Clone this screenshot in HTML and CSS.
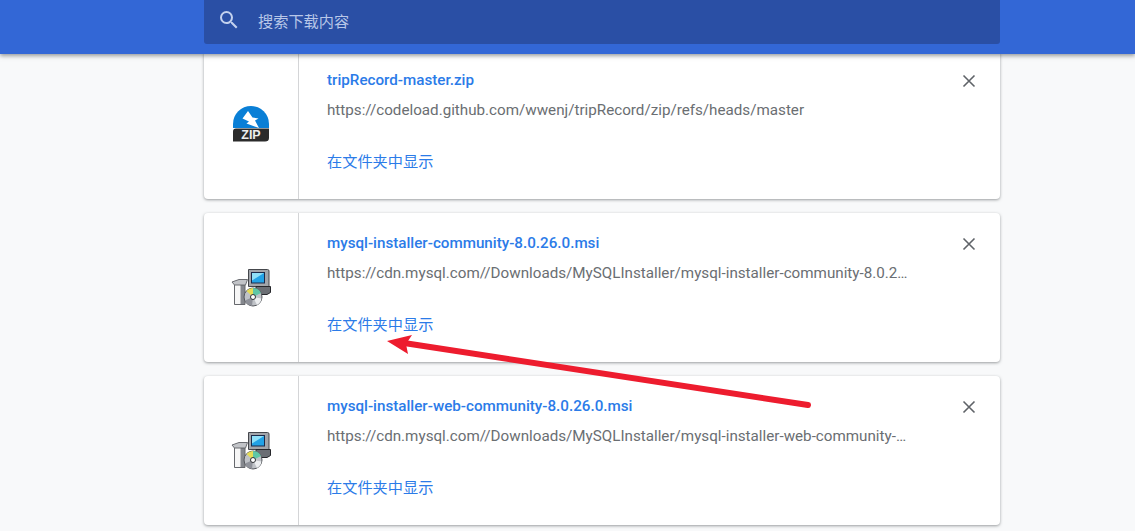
FILE: index.html
```html
<!DOCTYPE html>
<html lang="zh-CN">
<head>
  <meta charset="UTF-8">
  <meta name="viewport" content="width=device-width, initial-scale=1.0">
  <title>下载内容</title>
  <link rel="stylesheet" href="styles.css">
</head>
<body>
  <header class="toolbar">
    <div class="search-box">
      <svg class="search-icon" viewBox="0 0 24 24" width="24" height="24">
        <path d="M15.5 14h-.79l-.28-.27A6.47 6.47 0 0 0 16 9.5 6.5 6.5 0 1 0 9.5 16c1.61 0 3.09-.59 4.23-1.57l.27.28v.79l5 4.99L20.49 19l-4.99-5zm-6 0C7.01 14 5 11.99 5 9.5S7.01 5 9.5 5 14 7.01 14 9.5 11.99 14 9.5 14z"/>
      </svg>
      <span class="search-text">搜索下载内容</span>
    </div>
  </header>

  <main class="download-list">
    <section class="card">
      <div class="card-icon">
        <svg class="zip-icon" viewBox="0 0 36 36" width="36" height="36">
          <path d="M0 22 V18 A18 18 0 0 1 36 18 V22z" fill="#0a7fd6"/>
          <path d="M15 5 L9.500 12.500 L16 15.500 L13.500 17.500 L26 22 L22 14.500 L25.500 12.500 L19.500 11.500z" fill="#fff"/>
          <path d="M3 22.500 H36 V32 Q36 35.500 32 35.500 H0 V25.500 Q0 22.500 3 22.500z" fill="#2b2b2b"/>
          <text class="zip-label" x="18" y="33" text-anchor="middle">ZIP</text>
        </svg>
      </div>
      <div class="card-body">
        <a class="file-name">tripRecord-master.zip</a>
        <div class="file-url">https://codeload.github.com/wwenj/tripRecord/zip/refs/heads/master</div>
        <a class="show-link">在文件夹中显示</a>
      </div>
      <svg class="close-icon" viewBox="0 0 14 14" width="14" height="14"><path d="M1.500 1.500 12.500 12.500M12.500 1.500 1.500 12.500"/></svg>
    </section>

    <section class="card">
      <div class="card-icon">
        <svg viewBox="0 0 40 40" width="40" height="40"><use href="#msi-icon"/></svg>
      </div>
      <div class="card-body">
        <a class="file-name">mysql-installer-community-8.0.26.0.msi</a>
        <div class="file-url">https://cdn.mysql.com//Downloads/MySQLInstaller/mysql-installer-community-8.0.26.0.msi</div>
        <a class="show-link">在文件夹中显示</a>
      </div>
      <svg class="close-icon" viewBox="0 0 14 14" width="14" height="14"><path d="M1.500 1.500 12.500 12.500M12.500 1.500 1.500 12.500"/></svg>
    </section>

    <section class="card">
      <div class="card-icon">
        <svg viewBox="0 0 40 40" width="40" height="40"><use href="#msi-icon"/></svg>
      </div>
      <div class="card-body">
        <a class="file-name">mysql-installer-web-community-8.0.26.0.msi</a>
        <div class="file-url">https://cdn.mysql.com//Downloads/MySQLInstaller/mysql-installer-web-community-8.0.26.0.msi</div>
        <a class="show-link">在文件夹中显示</a>
      </div>
      <svg class="close-icon" viewBox="0 0 14 14" width="14" height="14"><path d="M1.500 1.500 12.500 12.500M12.500 1.500 1.500 12.500"/></svg>
    </section>
  </main>

  <!-- red annotation arrow drawn over the page -->
  <svg class="arrow" viewBox="0 0 1135 531" width="1135" height="531">
    <path d="M808 405 L404 343" stroke="#ed1c2e" stroke-width="6" stroke-linecap="round" fill="none"/>
    <path d="M387 341 L412 335 L406 344 L408 354z" fill="#ed1c2e"/>
  </svg>

  <svg class="defs" width="0" height="0">
    <defs>
      <g id="msi-icon">
        <!-- monitor -->
        <path d="M17.500 2.500 H36.500 Q38 2.500 38 4 V19.500 H17.500z" fill="#a2a5aa" stroke="#45474c" stroke-width="1"/>
        <path d="M20 5 H34 V16.500 H20z" fill="#1c2a4a"/>
        <path d="M21 6 H33 V15.500 H21z" fill="#22a2e6"/>
        <path d="M21 6 H33 L21 13.500z" fill="#8fe0f8"/>
        <path d="M25 19.500 H39.500 V25.500 L36 27.500 H30 L25 24z" fill="#6b6e74" stroke="#26272b" stroke-width="1"/>
        <!-- box -->
        <path d="M3.500 18 H14 V37.500 H3.500z" fill="#85888e" stroke="#66686d" stroke-width="1"/>
        <path d="M4 18 H9.500 V37 H4z" fill="#f6f6f6"/>
        <path d="M1 15 L8 12.500 H16.500 L14.500 18 H3.500z" fill="#c2c4c8" stroke="#6a6c71" stroke-width="1"/>
        <!-- disc -->
        <circle cx="22" cy="30" r="9" fill="#bfc2c7" stroke="#55585d" stroke-width="1"/>
        <path d="M22 30 L15.500 24 A9 9 0 0 1 22 21z" fill="#e6dc55"/>
        <path d="M22 30 L22 21 A9 9 0 0 1 30 26z" fill="#5fc7a6"/>
        <path d="M22 30 L30.500 31.500 A9 9 0 0 1 26 38z" fill="#eceef0"/>
        <path d="M22 30 L14 33.500 A9 9 0 0 0 21 39z" fill="#8f929a"/>
        <circle cx="22" cy="30" r="2.500" fill="#fff" stroke="#2e3034" stroke-width="1"/>
      </g>
    </defs>
  </svg>
</body>
</html>
```

FILE: styles.css
```css
html, body {
  height: 100%;
}

body {
  margin: 0;
  background: #f8f9fa;
  font-family: Roboto, "Noto Sans CJK SC", sans-serif;
  overflow: hidden;
}

a {
  color: #2b7be8;
}

.toolbar {
  position: relative;
  z-index: 2;
  height: 54px;
  padding-left: 204px;
  box-sizing: border-box;
  background: #3367d6;
  box-shadow: 0 2px 4px rgba(60, 64, 67, 0.5);
}

.search-box {
  display: flex;
  align-items: center;
  width: 796px;
  height: 44px;
  padding-bottom: 4px;
  box-sizing: border-box;
  background: #2a4fa5;
  border-radius: 0 0 3px 3px;
}

.search-icon {
  margin-left: 13px;
  fill: #c3d1ee;
}

.search-text {
  margin-left: 17px;
  font-size: 15.2px;
  color: #b8c7e8;
}

.download-list {
  display: flex;
  flex-direction: column;
  gap: 14px;
  width: 796px;
  margin: -4px 0 0 204px;
}

.card {
  position: relative;
  display: flex;
  height: 149px;
  background: #fff;
  border-radius: 4px;
  box-shadow: 0 1px 3px rgba(60, 64, 67, 0.5);
}

.card-icon {
  display: flex;
  align-items: center;
  justify-content: center;
  flex: none;
  width: 95px;
  padding-bottom: 2px;
  box-sizing: border-box;
  border-right: 1px solid #d4d5d7;
}

.card-body {
  min-width: 0;
  flex: 1;
  padding: 21px 92px 0 28px;
}

.file-name {
  display: block;
  font-size: 15.2px;
  font-weight: 500;
  line-height: 18px;
}

.file-url {
  margin-top: 12px;
  font-size: 15.2px;
  line-height: 18px;
  color: #6a6e72;
  white-space: nowrap;
  overflow: hidden;
  text-overflow: ellipsis;
}

.show-link {
  display: block;
  margin-top: 33.5px;
  font-size: 15.2px;
  line-height: 18px;
}

.close-icon {
  position: absolute;
  top: 23.5px;
  right: 24px;
  fill: none;
  stroke: #5f6368;
  stroke-width: 1.6;
}

.zip-label {
  font-family: "Liberation Sans", sans-serif;
  font-size: 12.5px;
  font-weight: 700;
  fill: #eee;
}

.arrow {
  position: absolute;
  top: 0;
  left: 0;
  z-index: 3;
}

.defs {
  position: absolute;
}
```
